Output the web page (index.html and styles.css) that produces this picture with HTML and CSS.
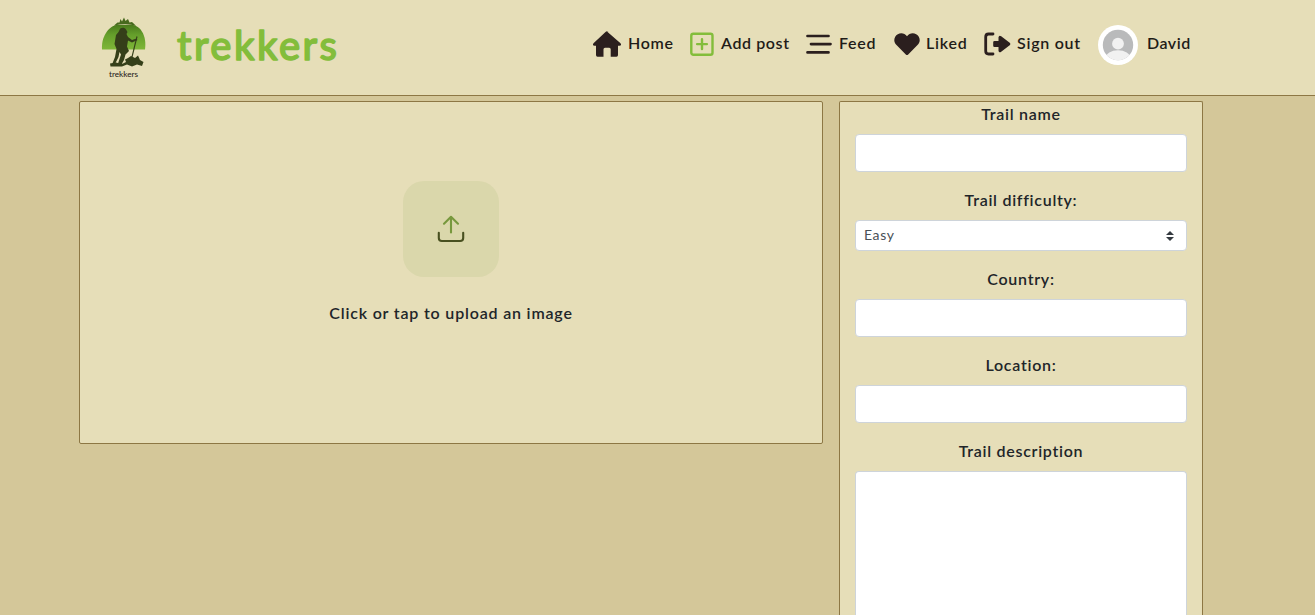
FILE: index.html
```html
<!DOCTYPE html>
<html lang="en">
<head>
<meta charset="utf-8">
<title>trekkers</title>
<link rel="stylesheet" href="styles.css">
</head>
<body>
<header class="header">
  <a class="brand">
    <svg class="logo" width="50" height="70" viewBox="0 0 50 70">
      <defs><linearGradient id="hill" x1="0" y1="0" x2="0" y2="1"><stop offset="0" stop-color="#4a7a1c"/><stop offset=".4" stop-color="#659f2b"/><stop offset="1" stop-color="#7fb638"/></linearGradient></defs>
      <path d="M2 37.500C1 22 11 14 16 13H33C40 14 47 23 45 37.500Z" fill="url(#hill)"/>
      <path d="M14 13.500L17.500 10.500L19.500 10.500L20.500 7L22 9.500L24 5.500L25.500 9L28 7L29.500 10.500L32 10L36 13.800L31 12.800Q24 11.500 14 13.500Z" fill="#47691e"/>
      <path d="M19.500 18C20 15 25 15 26 17.500L27.500 20L26.500 22L28 25L32 28L36.500 26.500L37.500 28L32 30.500L28 28.500L27 34.500L29 39L25.500 42.500L24 48L22 51.500L23.500 53.500H17.500L18.500 50L21 42.500L19.500 40L18.500 45L15.500 51L16 53L12 52.500L15 45L16.500 37L14.500 32L16 23L18.500 20Z" fill="#353f19"/>
      <path d="M37 24.500L31 49" stroke="#353f19" stroke-width="1.100"/>
      <path d="M10 51.500L16 50.500L22 52L26 50L25 47.500L28 46L31 44L35 46L38 43.500L40 48L43.500 50L42 54L37 52.500L32 54.500L27 52.500L22 54.500H10.500Z" fill="#353f19"/>
      <text class="logo-caption" x="9" y="65" textLength="29" lengthAdjust="spacingAndGlyphs">trekkers</text>
    </svg>
    <svg class="wordmark" width="170" height="60" viewBox="0 0 170 60">
      <text class="wordmark-text" x="5" y="43.500" textLength="160">trekkers</text>
    </svg>
  </a>
  <nav class="nav">
    <a class="nav-item home"><svg width="30" height="28" viewBox="0 0 30 28"><path d="M15 1.500L28.500 13.300Q30 15.500 27.500 15.700H26V25Q26 26.700 24.500 26.700H18.700V19.300Q18.700 17.700 17.200 17.700H13Q11.500 17.700 11.500 19.300V26.700H5.500Q4 26.700 4 25V15.700H2.500Q0 15.500 1.500 13.300L13.500 2Q15 .7 16.500 2Z" fill="#2b1f1e"/></svg><span>Home</span></a>
    <a class="nav-item add"><svg width="24" height="24" viewBox="0 0 24 24" fill="none" stroke="#83bd3b" stroke-width="2.400" stroke-linecap="round"><rect x="1.300" y="1.700" width="21.200" height="21" rx="2"/><path d="M12 7.200V17M7.100 12.100H16.900"/></svg><span>Add post</span></a>
    <a class="nav-item feed"><svg width="26" height="24" viewBox="0 0 26 24" stroke="#2b1f1e" stroke-width="2.700" stroke-linecap="round"><path d="M1.500 4H22.500M5 12.100H24.500M1.500 20.400H22.500"/></svg><span>Feed</span></a>
    <a class="nav-item liked"><svg width="26" height="24" viewBox="0 0 26 24"><path d="M13 4.300C16-.1 22.500.7 24.800 4.700C26.500 8 25.700 10.800 23.500 13.100L14.200 22.500Q13 23.600 11.800 22.500L2.500 13.100C.3 10.800-.5 8 1.200 4.700C3.500.7 10 -.1 13 4.300Z" fill="#2b1f1e"/></svg><span>Liked</span></a>
    <a class="nav-item signout"><svg width="27" height="24" viewBox="0 0 27 24"><path d="M9 2H4.500Q1.700 2 1.700 5V19Q1.700 22 4.500 22H9" fill="none" stroke="#2b1f1e" stroke-width="2.800" stroke-linecap="round"/><path d="M10.500 9H14.500V5.200Q15 2.800 17.200 4.200L26 11Q26.700 12 26 13L17.200 19.800Q15 21.200 14.500 18.800V15H10.500Q9.200 15 9.200 13.700V10.300Q9.200 9 10.500 9Z" fill="#2b1f1e"/></svg><span>Sign out</span></a>
    <a class="nav-item profile"><svg width="40" height="40" viewBox="0 0 40 40"><defs><clipPath id="face"><circle cx="20" cy="20" r="15.200"/></clipPath></defs><circle cx="20" cy="20" r="20" fill="#fff"/><g clip-path="url(#face)"><path d="M0 0H40V40H0Z" fill="#b9babb"/><circle cx="20" cy="18.700" r="5.900" fill="#f1f1f1"/><ellipse cx="20" cy="33" rx="12.300" ry="7.700" fill="#f1f1f1"/></g></svg><span>David</span></a>
  </nav>
</header>
<main class="content">
  <section class="upload">
    <div class="tile"><svg width="30" height="30" viewBox="0 0 30 30" fill="none" stroke-width="2.100" stroke-linecap="round" stroke-linejoin="round"><path d="M15 18.500V3M8 9.700L15 2.800L22 9.700" stroke="#77983d"/><path d="M2.800 18.700V24Q2.800 27 5.800 27H24.200Q27.200 27 27.200 24V18.700" stroke="#485020"/></svg></div>
    <p class="upload-text">Click or tap to upload an image</p>
  </section>
  <form class="form">
    <label>Trail name</label>
    <div class="field"></div>
    <label>Trail difficulty:</label>
    <div class="field select"><span>Easy</span><svg width="8" height="10" viewBox="0 0 8 10"><path d="M0 4L4 0L8 4ZM0 6H8L4 10Z" fill="#343a40"/></svg></div>
    <label>Country:</label>
    <div class="field"></div>
    <label>Location:</label>
    <div class="field"></div>
    <label>Trail description</label>
    <div class="field area"></div>
  </form>
</main>
</body>
</html>
```

FILE: styles.css
```css
* { box-sizing: border-box; }
body {
  margin: 0;
  height: 615px;
  overflow: hidden;
  background: #d4c799;
  color: #212529;
  font: 600 16px/24px Lato, "Liberation Sans", sans-serif;
}
svg { display: block; flex: none; }
.header {
  display: flex;
  justify-content: space-between;
  height: 96px;
  padding: 0 113px 0 100px;
  background: #e6deb8;
  border-bottom: 1px solid #8d7744;
}
.brand { display: flex; padding-top: 12px; }
.logo-caption { font: 500 7.5px Lato, sans-serif; fill: #2b1f1e; }
.wordmark { margin: 4px 0 0 22px; }
.wordmark-text {
  font: 500 40px Lato, sans-serif;
  fill: #83bd3b;
  stroke: #83bd3b;
  stroke-width: 1.4;
  stroke-linejoin: round;
}
.nav { display: flex; align-items: center; height: 88px; color: #1f1c18; }
.nav-item { display: flex; align-items: center; gap: 7px; white-space: nowrap; }
.nav-item span { padding-bottom: 2px; }
.home { width: 98px; gap: 6px; margin-left: -1px; letter-spacing: .7px; }
.add { width: 116px; gap: 7px; letter-spacing: .6px; }
.feed { width: 88px; gap: 7px; letter-spacing: .75px; }
.liked { width: 90px; gap: 6px; letter-spacing: .75px; }
.signout { width: 114px; gap: 6px; letter-spacing: .75px; }
.profile { width: 104px; gap: 9px; letter-spacing: .5px; }
.profile svg { margin-top: 2px; }
.content { display: flex; align-items: flex-start; gap: 16px; padding: 5px 112px 0 79px; }
.upload, .form { border: 1px solid #8d7744; border-radius: 2px; background: #e6deb8; }
.upload {
  display: flex;
  flex-direction: column;
  align-items: center;
  width: 744px;
  height: 343px;
  padding-top: 79px;
}
.tile {
  display: flex;
  align-items: center;
  justify-content: center;
  width: 96px;
  height: 96px;
  border-radius: 21px;
  background: #dad7ab;
}
.upload-text { margin: 24px 0 0; letter-spacing: .82px; }
.form {
  display: flex;
  flex-direction: column;
  width: 364px;
  height: 514px;
  padding: 0 15px;
  border-bottom: 0;
  border-radius: 2px 2px 0 0;
  text-align: center;
}
.form label { height: 24px; margin-bottom: 8px; letter-spacing: .72px; }
.field {
  flex: none;
  height: 38px;
  margin-bottom: 16px;
  border: 1px solid #ced4da;
  border-radius: 4px;
  background: #fff;
}
.select {
  display: flex;
  align-items: center;
  justify-content: space-between;
  height: 31px;
  padding: 0 12px 0 8px;
  color: #495057;
  font-size: 14px;
  font-weight: 400;
  letter-spacing: .6px;
}
.select span { padding-bottom: 1px; }
.area {
  height: 144px;
  margin-bottom: 0;
  border-bottom: 0;
  border-radius: 4px 4px 0 0;
}
```
